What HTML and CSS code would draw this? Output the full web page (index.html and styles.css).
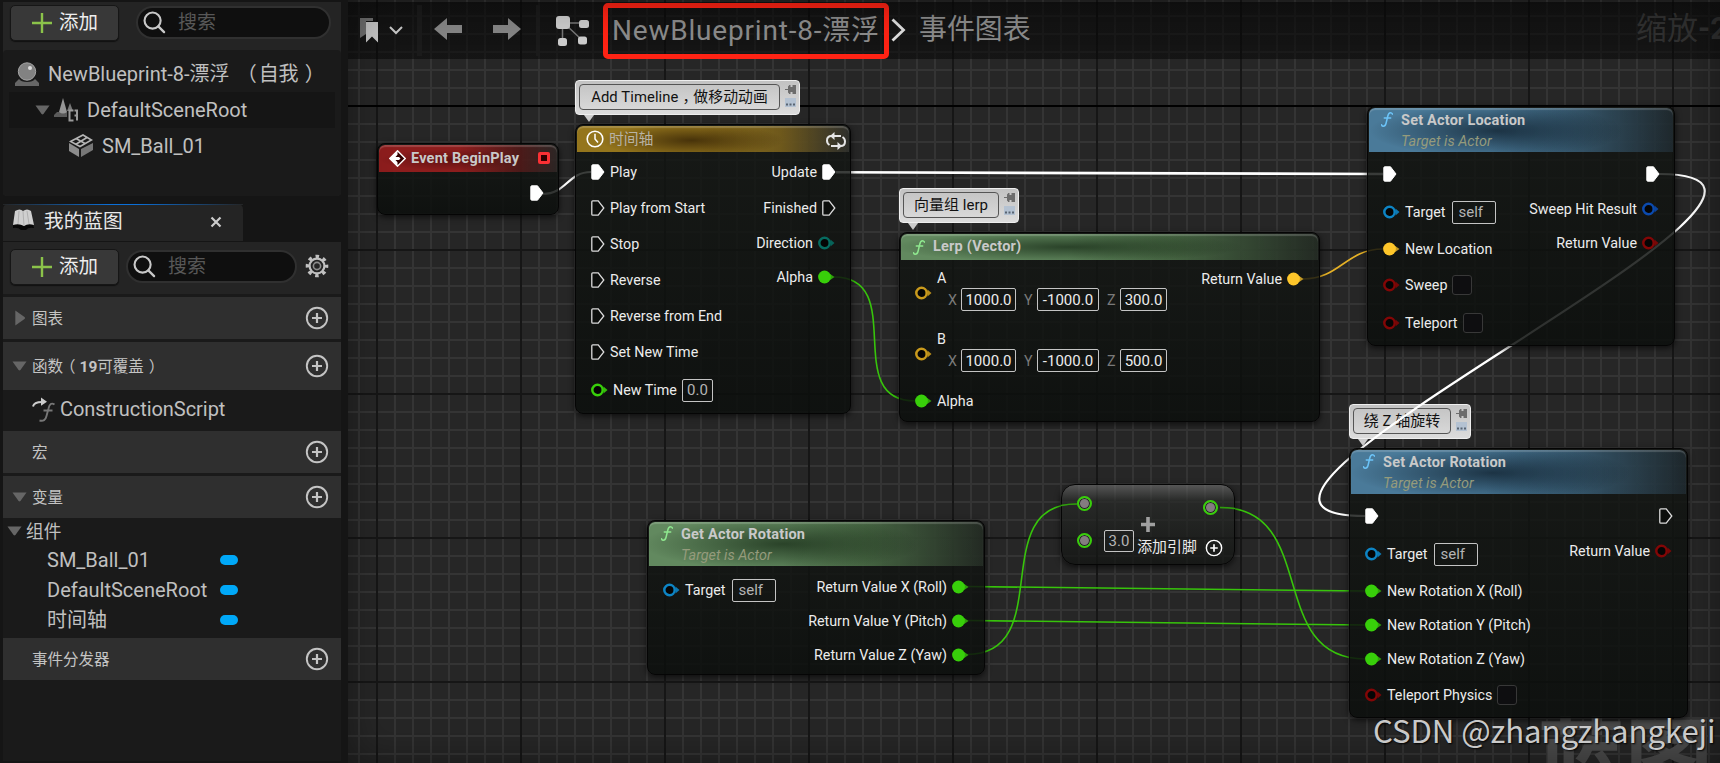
FILE: index.html
```html
<!DOCTYPE html>
<html lang="zh-CN">
<head>
<meta charset="utf-8">
<title>NewBlueprint-8-漂浮</title>
<link rel="stylesheet" href="styles.css">
</head>
<body>
<svg class="defs" width="0" height="0">
  <symbol id="plus" viewBox="0 0 20 20"><path d="M10 0v20M0 10h20" stroke="#8bc34a" stroke-width="2.4"/></symbol>
  <symbol id="search" viewBox="0 0 24 24"><circle cx="10" cy="10" r="8.4" fill="none" stroke="#c8c8c8" stroke-width="2.2"/><path d="M16 16l6 6" stroke="#c8c8c8" stroke-width="2.4" stroke-linecap="round"/></symbol>
  <symbol id="addc" viewBox="0 0 24 24"><circle cx="12" cy="12" r="10.2" fill="none" stroke="currentColor" stroke-width="1.9"/><path d="M12 7v10M7 12h10" stroke="currentColor" stroke-width="2.2"/></symbol>
  <symbol id="down" viewBox="0 0 16 10"><path d="M.5.3h15L9 9.300q-1 1-2 0z" fill="#666"/></symbol>
  <symbol id="right" viewBox="0 0 10 16"><path d="M.3.5v15L9.500 9q1-1 0-2z" fill="#666"/></symbol>
  <symbol id="exec" viewBox="0 0 14 16"><path d="M.8 1.800Q.8.8 1.800.8H7.500L13 8 7.500 15.200H1.800Q.8 15.200.8 14.200z" fill="#fff" stroke="#fff"/></symbol>
  <symbol id="execo" viewBox="0 0 14 16"><path d="M.8 1.800Q.8.8 1.800.8H7.200L12.800 8 7.200 15.200H1.800Q.8 15.200.8 14.200z" fill="#0c0e0c" stroke="#dcdcdc" stroke-width="1.3"/></symbol>
  <symbol id="dot" viewBox="0 0 17 14"><path d="M11.500 3.500L16.500 7l-5 3.500z" fill="currentColor" opacity=".75"/><circle cx="6.500" cy="7" r="6.400" fill="currentColor"/></symbol>
  <symbol id="ring" viewBox="0 0 17 14"><path d="M12.500 3.500L16.500 7l-4 3.500z" fill="currentColor" opacity=".9"/><circle cx="6.500" cy="7" r="5.200" fill="#050505" stroke="currentColor" stroke-width="2.500"/></symbol>
  <symbol id="func" viewBox="0 0 12 15"><path d="M11.500 2.200Q10.800.8 9.500.8 7.500.8 6.800 4L5 11.500Q4.300 14.200 2.300 14.200.9 14.200.6 12.800M3.300 6h6.400" fill="none" stroke="currentColor" stroke-width="1.500" stroke-linecap="round"/></symbol>
  <symbol id="pin" viewBox="0 0 11 9"><path d="M0 4h3V1.500l1-1V0h1.500v2h2V0H11v9H7.500V7h-2v2H4v-.5l-1-1V5H0z" fill="#6c6c6c"/></symbol>
  <symbol id="bubble" viewBox="0 0 11 9"><path d="M0 0h11v9H0z" fill="#b4c2d2"/><path d="M1 5.500h2v2H1zM4.500 5.500h2v2h-2zM8 5.500h2v2H8z" fill="#586472"/></symbol>
</svg>

<div class="app">
  <aside class="side">
    <section class="components">
      <div class="tools">
        <button class="add"><svg width="20" height="20"><use href="#plus"/></svg>添加</button>
        <div class="search wide"><svg width="23" height="23"><use href="#search"/></svg><span>搜索</span></div>
      </div>
      <div class="tree">
        <div class="node-row r1">
          <svg width="24" height="24" viewBox="0 0 24 24"><path d="M4 17L0 21v3h24v-3l-4-4q-2 3-8 3t-8-3z" fill="#666"/><circle cx="12" cy="9.500" r="8.700" fill="#828282" stroke="#a5a5a5"/><circle cx="15" cy="6" r="2" fill="#ddd"/></svg>
          <span class="self">NewBlueprint-8-漂浮<i class="lp">（</i>自我<i class="rp">）</i></span>
        </div>
        <div class="node-row r2">
          <svg width="15" height="10"><use href="#down"/></svg>
          <svg class="scene" width="25" height="24" viewBox="0 0 25 24"><path d="M3 14L0 17v2h13v-5z" fill="#5a5a5a"/><path d="M9 0L5 14q4 3 8 0z" fill="#969696"/><path d="M16 5l-3 8h6z" fill="#777"/><path d="M19.500 12.500h-4v10h4M20.500 12.500H23v10M20.500 17.500H23" stroke="#999" stroke-width="2" fill="none"/></svg>
          <span>DefaultSceneRoot</span>
        </div>
        <div class="node-row r3">
          <svg width="24" height="24" viewBox="0 0 24 24"><path d="M0 9l10 6v8L0 17z" fill="#8c8c8c"/><path d="M12 15l12-6v7l-12 7z" fill="#777"/><path d="M1.500 7.500L14 1l8.500 5L11 12.500zM7 4.500l9.500 5.200M6.500 10.500L18 3.500" fill="none" stroke="#b5b5b5" stroke-width="1.600"/></svg>
          <span>SM_Ball_01</span>
        </div>
      </div>
    </section>

    <div class="tab">
      <svg width="23" height="22" viewBox="0 0 23 22"><path d="M1 15h20l1 4q-6-1-8 2h-5q-3-3-8-2z" fill="#080808"/><path d="M3 2q5-3 8 0 4-3 8 0l3 14q-6-2-10 1-5-3-11-1z" fill="#cfcfcf"/><path d="M11 2l1 15M7 2L6 15M15 2l2 13" stroke="#b0b0b0"/></svg>
      <span>我的蓝图</span>
      <svg class="x" width="12" height="12" viewBox="0 0 12 12"><path d="M1.500 1.500l9 9M10.500 1.500l-9 9" stroke="#ccc" stroke-width="2.200"/></svg>
    </div>

    <section class="blueprint">
      <div class="tools">
        <button class="add"><svg width="20" height="20"><use href="#plus"/></svg>添加</button>
        <div class="search"><svg width="23" height="23"><use href="#search"/></svg><span>搜索</span></div>
        <svg class="gear" width="24" height="24" viewBox="0 0 24 24"><circle cx="12" cy="12" r="9.600" fill="none" stroke="#c0c0c0" stroke-width="3.400" stroke-dasharray="3.500 4.040" stroke-dashoffset="1.750"/><circle cx="12" cy="12" r="7.400" fill="none" stroke="#c0c0c0" stroke-width="2.200"/><circle cx="12" cy="12" r="3.600" fill="none" stroke="#8c8c8c" stroke-width="1.600"/></svg>
      </div>
      <div class="sec"><svg class="tri side-tri" width="10" height="16"><use href="#right"/></svg><span>图表</span><svg class="plus" width="24" height="24"><use href="#addc"/></svg></div>
      <div class="sec tall"><svg class="tri" width="15" height="10"><use href="#down"/></svg><span>函数<i class="op">（</i><b>19</b>可覆盖<i class="cp">）</i></span><svg class="plus" width="24" height="24"><use href="#addc"/></svg></div>
      <div class="script">
        <svg width="24" height="25" viewBox="0 0 24 25"><path d="M1 9.500Q2 5 10 5" fill="none" stroke="#ccc" stroke-width="2"/><path d="M9 .5l6 4.200-6 4z" fill="#ccc"/><path d="M22.500 7.500q-4.500-3-6 4L14.500 19q-1.300 6-7 4.500M11.500 13.500h9" fill="none" stroke="#777" stroke-width="1.900"/></svg>
        <span>ConstructionScript</span>
      </div>
      <div class="sec macro"><span>宏</span><svg class="plus" width="24" height="24"><use href="#addc"/></svg></div>
      <div class="sec"><svg class="tri" width="15" height="10"><use href="#down"/></svg><span>变量</span><svg class="plus" width="24" height="24"><use href="#addc"/></svg></div>
      <div class="vars">
        <div class="group"><svg width="15" height="10"><use href="#down"/></svg><span>组件</span></div>
        <div class="var"><span>SM_Ball_01</span><i class="pill"></i></div>
        <div class="var"><span>DefaultSceneRoot</span><i class="pill"></i></div>
        <div class="var"><span>时间轴</span><i class="pill"></i></div>
      </div>
      <div class="sec last"><span>事件分发器</span><svg class="plus" width="24" height="24"><use href="#addc"/></svg></div>
    </section>
  </aside>

  <main class="graph">
    <div class="axis"></div>
    <div class="big">蓝图</div>

    <div class="note n1"><span>Add Timeline<i class="comma">，</i>做移动动画</span><div><svg width="11" height="9"><use href="#pin"/></svg><svg width="11" height="9"><use href="#bubble"/></svg></div></div>
    <div class="note n2"><span>向量组 lerp</span><div><svg width="11" height="9"><use href="#pin"/></svg><svg width="11" height="9"><use href="#bubble"/></svg></div></div>
    <div class="note n3"><span>绕 Z 轴旋转</span><div><svg width="11" height="9"><use href="#pin"/></svg><svg width="11" height="9"><use href="#bubble"/></svg></div></div>

    <svg class="wires" viewBox="348 0 1372 763" width="1372" height="763" fill="none">
      <g stroke="#fff" stroke-width="2.200">
        <path d="M543 194C566 194 568 172 591 172"/>
        <path d="M836 172.300L1383 174" stroke-width="2.600"/>
        <path d="M1659 174C1895 174 1129 516 1365 516"/>
      </g>
      <g stroke="#37c40b" stroke-width="1.600">
        <path d="M834 277C909 277 840 401 915 401"/>
        <path d="M967 586.500L1365 591M967 620.500L1365 625"/>
        <path d="M967 654.500C1057 654.500 986 504 1076 504"/>
        <path d="M1220 507.500C1320 507.500 1265 659 1365 659"/>
      </g>
      <path d="M1303 279C1340 279 1346 249 1383 249" stroke="#e5b126" stroke-width="1.600"/>
    </svg>

    <div class="gnode event">
      <header class="red"><svg width="17" height="17" viewBox="0 0 17 17"><path d="M8.500.8L16.200 8.500 8.500 16.200.8 8.500z" fill="#300" stroke="#fff" stroke-width="1.400"/><path d="M.8 8.500L8.500.8v4L6.500 7H10l1.500 1.500L10 10H6.500l2 2.200v4z" fill="#fff"/></svg><b>Event BeginPlay</b><i class="delegate"></i></header>
      <div class="cols"><div></div><div class="out"><div class="pin exec"><svg width="14" height="16"><use href="#exec"/></svg></div></div></div>
    </div>

    <div class="gnode timeline">
      <header class="gold"><svg width="18" height="18" viewBox="0 0 18 18"><circle cx="9" cy="9" r="7.800" fill="none" stroke="#fff" stroke-width="1.600"/><path d="M9 3.800V9l3 3.500" fill="none" stroke="#fff" stroke-width="1.500"/></svg><span>时间轴</span><svg class="loop" width="20" height="18" viewBox="0 0 20 18"><path d="M3.500 13Q1 11.500 1 8.500 1 4 5.500 4H15M16.500 5Q19 6.500 19 9.500 19 14 14.500 14H5" fill="none" stroke="#e6e6e6" stroke-width="2"/><path d="M8.500 0v8L4 4zM11.500 10v8l4.500-4z" fill="#e6e6e6"/></svg></header>
      <div class="cols">
        <div class="in">
          <div class="pin exec"><svg width="14" height="16"><use href="#exec"/></svg>Play</div>
          <div class="pin exec"><svg width="14" height="16"><use href="#execo"/></svg>Play from Start</div>
          <div class="pin exec"><svg width="14" height="16"><use href="#execo"/></svg>Stop</div>
          <div class="pin exec"><svg width="14" height="16"><use href="#execo"/></svg>Reverse</div>
          <div class="pin exec"><svg width="14" height="16"><use href="#execo"/></svg>Reverse from End</div>
          <div class="pin exec"><svg width="14" height="16"><use href="#execo"/></svg>Set New Time</div>
          <div class="pin field green"><svg width="17" height="14"><use href="#ring"/></svg>New Time<span class="box w31 dim">0.0</span></div>
        </div>
        <div class="out">
          <div class="pin exec">Update<svg width="14" height="16"><use href="#exec"/></svg></div>
          <div class="pin exec">Finished<svg width="14" height="16"><use href="#execo"/></svg></div>
          <div class="pin teal">Direction<svg width="17" height="14"><use href="#ring"/></svg></div>
          <div class="pin green">Alpha<svg width="17" height="14"><use href="#dot"/></svg></div>
        </div>
      </div>
    </div>

    <div class="gnode lerp">
      <header class="grn"><svg width="12" height="15"><use href="#func"/></svg><b>Lerp (Vector)</b></header>
      <div class="cols">
        <div class="in">
          <div class="vec gold-pin"><svg width="17" height="14"><use href="#ring"/></svg><div class="vbody"><span>A</span><div class="xyz"><i>X</i><span class="box w55">1000.0</span><i>Y</i><span class="box w62">-1000.0</span><i>Z</i><span class="box w47">300.0</span></div></div></div>
          <div class="vec gold-pin"><svg width="17" height="14"><use href="#ring"/></svg><div class="vbody"><span>B</span><div class="xyz"><i>X</i><span class="box w55">1000.0</span><i>Y</i><span class="box w62">-1000.0</span><i>Z</i><span class="box w47">500.0</span></div></div></div>
          <div class="pin green"><svg width="17" height="14"><use href="#dot"/></svg>Alpha</div>
        </div>
        <div class="out"><div class="pin yellow">Return Value<svg width="17" height="14"><use href="#dot"/></svg></div></div>
      </div>
    </div>

    <div class="gnode setloc">
      <header class="blu two"><svg width="12" height="15"><use href="#func"/></svg><div><b>Set Actor Location</b><em>Target is Actor</em></div></header>
      <div class="cols">
        <div class="in">
          <div class="pin exec"><svg width="14" height="16"><use href="#exec"/></svg></div>
          <div class="pin field sky"><svg width="17" height="14"><use href="#ring"/></svg>Target<span class="box w44 dim">self</span></div>
          <div class="pin yellow"><svg width="17" height="14"><use href="#dot"/></svg>New Location</div>
          <div class="pin check maroon"><svg width="17" height="14"><use href="#ring"/></svg>Sweep<span class="cb"></span></div>
          <div class="pin check maroon"><svg width="17" height="14"><use href="#ring"/></svg>Teleport<span class="cb"></span></div>
        </div>
        <div class="out">
          <div class="pin exec"><svg width="14" height="16"><use href="#exec"/></svg></div>
          <div class="pin blue">Sweep Hit Result<svg width="17" height="14"><use href="#ring"/></svg></div>
          <div class="pin maroon">Return Value<svg width="17" height="14"><use href="#ring"/></svg></div>
        </div>
      </div>
    </div>

    <div class="gnode setrot">
      <header class="blu two"><svg width="12" height="15"><use href="#func"/></svg><div><b>Set Actor Rotation</b><em>Target is Actor</em></div></header>
      <div class="cols">
        <div class="in">
          <div class="pin exec"><svg width="14" height="16"><use href="#exec"/></svg></div>
          <div class="pin field sky"><svg width="17" height="14"><use href="#ring"/></svg>Target<span class="box w44 dim">self</span></div>
          <div class="pin green"><svg width="17" height="14"><use href="#dot"/></svg>New Rotation X (Roll)</div>
          <div class="pin green"><svg width="17" height="14"><use href="#dot"/></svg>New Rotation Y (Pitch)</div>
          <div class="pin green"><svg width="17" height="14"><use href="#dot"/></svg>New Rotation Z (Yaw)</div>
          <div class="pin check maroon"><svg width="17" height="14"><use href="#ring"/></svg>Teleport Physics<span class="cb"></span></div>
        </div>
        <div class="out">
          <div class="pin exec"><svg width="14" height="16"><use href="#execo"/></svg></div>
          <div class="pin maroon">Return Value<svg width="17" height="14"><use href="#ring"/></svg></div>
        </div>
      </div>
    </div>

    <div class="gnode getrot">
      <header class="grn two"><svg width="12" height="15"><use href="#func"/></svg><div><b>Get Actor Rotation</b><em>Target is Actor</em></div></header>
      <div class="cols">
        <div class="in"><div class="pin field sky"><svg width="17" height="14"><use href="#ring"/></svg>Target<span class="box w44 dim">self</span></div></div>
        <div class="out">
          <div class="pin green">Return Value X (Roll)<svg width="17" height="14"><use href="#dot"/></svg></div>
          <div class="pin green">Return Value Y (Pitch)<svg width="17" height="14"><use href="#dot"/></svg></div>
          <div class="pin green">Return Value Z (Yaw)<svg width="17" height="14"><use href="#dot"/></svg></div>
        </div>
      </div>
    </div>

    <div class="gnode sum">
      <div class="sum-in"><i class="knob"></i><i class="knob"></i></div>
      <span class="box w31 dim">3.0</span>
      <div class="sum-mid"><svg width="14" height="15" viewBox="0 0 14 15"><path d="M7 0v15M0 7.500h14" stroke="#a0a0a0" stroke-width="3.600"/></svg><span>添加引脚</span></div>
      <div class="sum-out"><i class="knob"></i><svg width="18" height="18"><use href="#addc"/></svg></div>
    </div>
    <svg class="wires" viewBox="348 0 1372 763" width="1372" height="763" fill="none"><path d="M1061 505.500Q1068 504 1077 504M1220 507.500Q1228 507.500 1235 508.500" stroke="#2f9e0c" stroke-width="1.500"/></svg>

    <nav class="bar">
      <svg class="i-mark" width="18" height="25" viewBox="0 0 18 25"><path d="M0 0h13v3H6v13l-6 4z" fill="#6e6e6e"/><path d="M6 4h12v20.500l-6-6-6 6z" fill="#c4c4c4"/></svg>
      <svg class="i-chev" width="14" height="9" viewBox="0 0 14 9"><path d="M1 1l6 6 6-6" fill="none" stroke="#c8c8c8" stroke-width="2"/></svg>
      <i class="sep"></i>
      <svg class="i-back" width="28" height="22" viewBox="0 0 28 22"><path d="M0 11L13 0v7h15v8H13v7z" fill="#858585"/></svg>
      <svg class="i-fwd" width="28" height="22" viewBox="0 0 28 22"><path d="M28 11L15 0v7H0v8h15v7z" fill="#858585"/></svg>
      <i class="sep s2"></i>
      <svg class="i-graph" width="33" height="30" viewBox="0 0 33 30"><path d="M8 7h18M6.500 10v14M10 9l16 15" stroke="#777" stroke-width="1.500"/><rect width="14" height="13" rx="3" fill="#ccc"/><rect x="23" y="4" width="10" height="8" rx="2.500" fill="#ccc"/><rect x="2" y="22" width="9" height="8" rx="2.500" fill="#ccc"/><rect x="22" y="20.500" width="9" height="8" rx="2.500" fill="#ccc"/></svg>
      <div class="crumb">NewBlueprint-8-漂浮</div>
      <svg class="i-gt" width="15" height="24" viewBox="0 0 15 24"><path d="M1.500 1.500L12.500 12l-11 10.500" fill="none" stroke="#ddd" stroke-width="2.800"/></svg>
      <span class="crumb2">事件图表</span>
      <span class="zoom">缩放<b>-2</b></span>
    </nav>
    <div class="csdn">CSDN @zhangzhangkeji</div>
  </main>
</div>
</body>
</html>
```
FILE: styles.css
```css
* { box-sizing: border-box; }
html, body { margin: 0; height: 100%; overflow: hidden; background: #151515; }
body { font-family: Roboto, "Noto Sans CJK SC", sans-serif; color: #c0c0c0; }
i { font-style: normal; }
svg { display: block; flex: none; }
.defs { position: absolute; }
.app { display: flex; width: 1720px; height: 763px; }

/* ---------- side panels ---------- */
.side { width: 348px; padding: 2px 7px 2px 3px; display: flex; flex-direction: column; font-size: 20px; background: #151515; }
.components { height: 194px; background: #242424; border-radius: 0 0 4px 4px; }
.tools { display: flex; align-items: flex-start; height: 48px; padding: 3px 0 0 7px; }
.add { display: flex; align-items: center; gap: 7px; width: 109px; height: 36px; padding: 0 0 5px 21px; margin: 0; font: inherit; font-size: 19.500px; color: #ededed; background: #383838; border: 1px solid #161616; border-radius: 5px; box-shadow: 0 1px 1px #111; white-space: nowrap; }
.add svg { margin-top: 5px; }
.search { display: flex; align-items: center; gap: 12px; height: 33px; width: 171px; margin: 1px 0 0 7px; padding: 0 0 1px 5px; color: #575757; background: #0f0f0f; border: 2px solid #303030; border-radius: 17px; font-size: 19px; }
.search.wide { width: 195px; margin-left: 17px; }
.search span { margin-top: -4px; }
.tree { height: 146px; padding: 6px; background: #1a1a1a; border-radius: 4px; }
.node-row { display: flex; align-items: center; height: 36px; white-space: nowrap; }
.r1 { padding-left: 6px; gap: 9px; }
.r1 span { margin-top: -3px; }
.r2 { padding-left: 26px; gap: 4px; background: #151515; }
.r2 span { margin-left: 4px; }
.r3 { padding-left: 60px; gap: 9px; }
.lp { margin-left: 7px; margin-right: 2px; }
.rp { margin-left: 6px; }
.tab { display: flex; align-items: center; width: 240px; height: 37px; margin-top: 8px; padding: 0 0 4px 9px; color: #e8e8e8; background: #242424; border-radius: 5px 5px 0 0; border-top: 1px solid; border-image: linear-gradient(90deg, #242424, #0b6fd8 45%, #0b6fd8 55%, #242424) 1; font-size: 19.700px; }
.tab svg:first-child { margin-top: -3px; }
.tab span { margin: -3px 0 0 9px; }
.tab .x { margin: 2px 0 0 87px; }
.blueprint { flex: 1; margin-top: 1px; background: #1a1a1a; }
.blueprint .tools { height: 52px; padding-top: 7px; background: #242424; }
.gear { margin: 5px 0 0 8px; }
.sec { display: flex; align-items: center; height: 42px; margin-top: 3px; padding: 0 12px 0 29px; background: #2f2f2f; font-size: 15.500px; color: #c4c4c4; }
.sec span { margin-top: -2px; }
.sec .plus { margin-left: auto; }
.tri { margin-left: -20px; margin-right: 5px; }
.side-tri { margin-left: -17px; margin-right: 7px; }
.tall { height: 48px; }
.op { margin-left: -3px; margin-right: 4px; }
.cp { margin-left: 5px; }
.macro { margin-top: 0; }
.last { margin-top: 0; }
.script { display: flex; align-items: center; gap: 4px; height: 41px; padding: 0 0 3px 29px; letter-spacing: -.05px; }
.vars { height: 120px; }
.group { display: flex; align-items: center; gap: 4px; height: 27px; padding: 0 0 1px 4px; font-size: 17.700px; }
.group span { margin-top: -2px; }
.var { display: flex; align-items: center; justify-content: space-between; height: 30px; padding: 0 103px 0 44px; }
.var:last-child span { margin-top: -3px; }
.pill { width: 18px; height: 10px; border-radius: 5px; background: #00a8f8; }

/* ---------- graph ---------- */
.graph { position: relative; width: 1372px; height: 763px; overflow: hidden; background-color: #262626;
  background-image:
    linear-gradient(90deg, #161616 2px, transparent 2px),
    linear-gradient(#161616 2px, transparent 2px),
    linear-gradient(90deg, #343434 2px, transparent 2px),
    linear-gradient(#343434 2px, transparent 2px);
  background-size: 144px 144px, 144px 144px, 18px 18px, 18px 18px;
  background-position: 28px 0, 0 105px, 10px 0, 0 15px; }
.graph::after { content: ""; position: absolute; inset: 0; box-shadow: inset 0 0 40px rgba(0,0,0,.4); pointer-events: none; }
.axis { position: absolute; left: 0; right: 0; top: 105px; height: 2px; background: #000; }
.big { position: absolute; left: 1189px; top: 700px; font: 700 88px/1.2 "Noto Sans CJK SC", sans-serif; color: #4a4a4a; white-space: nowrap; }
.wires { position: absolute; left: 0; top: 0; }

.note { position: absolute; display: flex; height: 35px; padding: 4px 4px 5px 4px; border-radius: 4px; border: 1px solid #eee; background: linear-gradient(#c2c2c2, #dcdcdc); color: #111; font-size: 15px; }
.note::after { content: ""; position: absolute; left: 8px; top: 34px; border: 5px solid transparent; border-top: 7px solid #ccc; border-bottom: 0; }
.note > span { flex: 1; margin: -1px 0 0 -1px; height: 26px; line-height: 24px; border: 1px solid #555; border-radius: 4px; text-align: center; white-space: nowrap; }
.note div { width: 15px; padding: 0 0 0 5px; display: flex; flex-direction: column; gap: 4px; }
.comma { padding-left: 4px; letter-spacing: -4px; }
.n1 { left: 227px; top: 80px; width: 225px; }
.n1 > span { font-size: 14.800px; letter-spacing: .1px; }
.n2 { left: 551px; top: 188px; width: 120px; }
.n3 { left: 1001px; top: 404px; width: 122px; }

.gnode { position: absolute; border: 1px solid #050505; border-radius: 8px; background: linear-gradient(rgba(19,22,19,.82), rgba(11,14,12,.86)); box-shadow: 0 2px 6px rgba(0,0,0,.65); color: #ececec; font-size: 14.300px; }
.gnode header { display: flex; align-items: center; height: 26px; margin: 1px; border-radius: 6px 6px 0 0; color: #c9c9c9; white-space: nowrap; box-shadow: inset 0 2px 1px rgba(255,255,255,.18); }
header b { font-size: 14.500px; font-weight: 700; letter-spacing: .2px; }
header em { display: block; font-size: 14.400px; color: #959b7c; margin-top: 4px; line-height: 17px; }
.gnode header.two { height: 44px; align-items: flex-start; padding-top: 4px; }
header.two b { display: block; line-height: 17px; }
.red { background: radial-gradient(ellipse 40% 40% at 40% 55%, rgba(30,0,0,.4), transparent), linear-gradient(90deg, #8d1d1d 45%, rgba(120,30,30,.55) 80%, rgba(80,60,60,.4)); }
.gold { background: radial-gradient(ellipse 34% 65% at 42% 55%, rgba(30,15,0,.65), transparent), linear-gradient(90deg, #94751c 45%, rgba(140,110,30,.75) 75%, rgba(70,70,65,.5)); }
.grn { background: radial-gradient(ellipse 42% 60% at 40% 50%, rgba(5,20,5,.6), transparent), linear-gradient(90deg, #62895f 40%, rgba(85,125,80,.75) 65%, rgba(50,62,50,.5)); }
.blu { background: radial-gradient(ellipse 42% 60% at 42% 52%, rgba(5,15,25,.65), transparent), linear-gradient(90deg, #4a7a99 40%, rgba(65,110,140,.75) 65%, rgba(45,65,80,.4)); }
.grn > svg { color: #8fe88f; }
.blu > svg { color: #6cc4f8; }
.cols { display: flex; justify-content: space-between; padding: 1px 14px 0 15px; white-space: nowrap; }
.two + .cols { padding-top: 3px; }
.out { display: flex; flex-direction: column; align-items: flex-end; }
.out .pin:not(.exec) { margin-right: 1px; }
.pin { display: flex; align-items: center; gap: 5px; height: 34px; }
.pin.exec { height: 36px; }
.pin.field { height: 40px; }
.pin.check { height: 38px; }
.green svg { color: #38cf0a; }
.teal svg { color: #066b60; }
.sky svg { color: #0d84c4; }
.yellow svg { color: #fec62a; }
.blue svg { color: #0b4aae; }
.maroon svg { color: #820606; }
.gold-pin > svg { color: #c99a1c; }
.box { display: flex; align-items: center; justify-content: center; height: 23px; border: 1px solid #c4c4c4; border-radius: 2px; font-size: 15px; }
.pin .box, .pin .cb { margin-left: 0; }
.sky .box { margin-left: 1px; }
.dim { color: #b4b4b4; }
.w31 { width: 31px; } .w44 { width: 44px; justify-content: flex-start; padding-left: 6px; } .w47 { width: 47px; } .w55 { width: 55px; } .w62 { width: 62px; }
.cb { width: 20px; height: 20px; border: 1px solid #383838; border-radius: 3px; background: #0e0e10; }
.vec { display: flex; align-items: center; gap: 4px; height: 61px; }
.vbody > span { display: block; line-height: 14px; margin: -3px 0 0 1px; }
.xyz { display: flex; align-items: center; margin: 3px 0 0 12px; }
.xyz i { width: 13px; color: #7a7a7a; }
.xyz .box + i { margin-left: 8px; }

.event { left: 29px; top: 143px; width: 182px; height: 72px; }
.event header { height: 27px; padding-left: 10px; gap: 5px; }
.event .cols { padding-top: 2px; }
.delegate { width: 12px; height: 12px; margin-left: auto; margin-right: 7px; margin-top: -2px; border: 3px solid #fb3034; border-radius: 2px; background: #300; }
.timeline { left: 227px; top: 124px; width: 276px; height: 290px; }
.gnode .gold { padding: 0 3px 0 9px; }
.gold span { margin: -4px 0 0 5px; font-size: 14.800px; color: #b9b3a4; }
.loop { margin-left: auto; margin-top: 3px; }
.lerp { left: 551px; top: 232px; width: 421px; height: 190px; }
.gnode.lerp header, .gnode .two { padding-left: 12px; gap: 8px; }
.lerp header b { margin-top: -2px; }
.setloc { left: 1019px; top: 106px; width: 308px; height: 240px; }
.setrot { left: 1001px; top: 448px; width: 339px; height: 270px; }
.getrot { left: 299px; top: 520px; width: 338px; height: 155px; }

.sum { left: 713px; top: 484px; width: 174px; height: 81px; padding: 11px 11px 0 15px; display: flex; border-radius: 14px; background: linear-gradient(rgba(125,125,125,.55), rgba(40,42,40,.7) 16px, rgba(18,20,18,.75)); }
.knob { display: block; width: 15px; height: 15px; border-radius: 50%; border: 2px solid #38cf0a; background: #847c80; box-shadow: inset 0 0 0 1px #222; }
.sum-in { display: flex; flex-direction: column; gap: 22px; }
.sum .box { margin: 34px 3px 0 12px; height: 22px; }
.sum-mid { display: flex; flex-direction: column; align-items: center; width: 59px; padding-top: 21px; }
.sum-mid svg { margin-left: -38px; }
.sum-mid span { line-height: 20px; font-size: 14.900px; white-space: nowrap; margin: 5px 0 0 1px; }
.sum-out { display: flex; flex-direction: column; align-items: flex-start; gap: 24px; padding: 4px 0 0 7px; color: #fff; }
.sum-out svg { margin-left: 2px; }

.bar { position: absolute; left: 0; top: 2px; right: 0; height: 57px; padding-left: 12px; display: flex; align-items: center; background: linear-gradient(rgba(8,8,8,.66), rgba(8,8,8,.58)); white-space: nowrap; }
.i-chev { margin-left: 11px; }
.sep { width: 5px; height: 51px; margin-left: 14px; background: #1b1b1b; }
.i-back { margin-left: 12px; margin-top: -4px; }
.i-fwd { margin-left: 31px; margin-top: -4px; }
.s2 { width: 4px; margin-left: 15px; }
.i-graph { margin-left: 16px; }
.crumb { width: 286px; height: 56px; margin: 1px 0 0 14px; padding-left: 4px; border: 5px solid #ff2314; border-radius: 5px; line-height: 46px; font-size: 28px; letter-spacing: .8px; color: #8b8b8b; }
.i-gt { margin-left: 2px; margin-top: -1px; }
.crumb2 { margin: -8px 0 0 13px; font-size: 27.900px; color: #8b8b8b; }
.zoom { position: absolute; left: 1288px; top: 1px; font-size: 31px; color: #303030; }
.csdn { position: absolute; left: 1025px; top: 706px; z-index: 2; font: 31.200px/48px "Noto Sans CJK SC", sans-serif; letter-spacing: -.1px; color: #c9c9c9; text-shadow: 1px 1px 2px #000; white-space: nowrap; }
```
